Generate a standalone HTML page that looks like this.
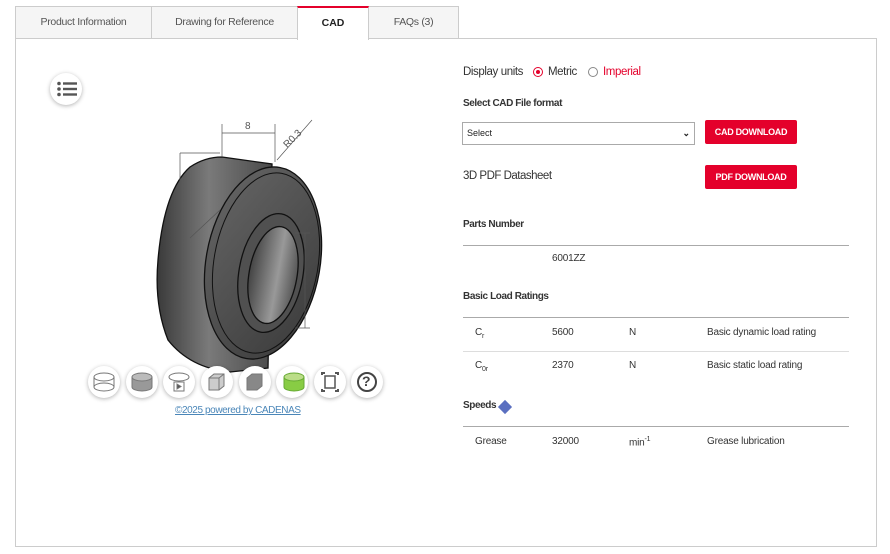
<!DOCTYPE html>
<html><head><meta charset="utf-8"><style>
*{box-sizing:border-box;margin:0;padding:0}
body{width:890px;height:554px;background:#fff;font-family:"Liberation Sans",Arial,sans-serif;color:#333;position:relative;overflow:hidden}
.a{position:absolute}
.tab{position:absolute;top:6px;height:33px;background:#f5f5f5;border:1px solid #ccc;border-bottom:none;font-size:10.5px;color:#555;text-align:center;line-height:31px;letter-spacing:-0.3px}
.panel{position:absolute;left:15px;top:38px;width:862px;height:509px;border:1px solid #ccc}
.btn{position:absolute;background:#e4002b;color:#fff;font-size:9px;font-weight:bold;text-align:center;line-height:24px;border-radius:2px;width:92px;height:24px;letter-spacing:-0.3px}
.h{font-size:10px;font-weight:bold;color:#333;letter-spacing:-0.4px}
.line{position:absolute;left:463px;width:386px;height:1px;background:#aaa}
.t{position:absolute;font-size:10px;color:#333;letter-spacing:-0.2px}
.circ{position:absolute;width:32px;height:32px;border-radius:50%;background:#fff;box-shadow:0 1px 4px rgba(0,0,0,.3)}
</style></head><body>
<div class="tab" style="left:15px;width:137px">Product Information</div>
<div class="tab" style="left:151px;width:147px">Drawing for Reference</div>
<div class="tab" style="left:368px;width:91px">FAQs (3)</div>
<div class="panel"></div>
<div class="a" style="left:297px;top:6px;width:72px;height:34px;background:#fff;border:1px solid #ccc;border-top:2px solid #e4002b;border-bottom:none;font-size:10.5px;font-weight:bold;text-align:center;line-height:30px;color:#222">CAD</div>

<div class="circ" style="left:50px;top:73px"></div>
<svg class="a" style="left:56px;top:81px" width="22" height="16"><g fill="#555"><circle cx="3" cy="2.5" r="1.8"/><circle cx="3" cy="8" r="1.8"/><circle cx="3" cy="13.5" r="1.8"/><rect x="7" y="1.3" width="14" height="2.4"/><rect x="7" y="6.8" width="14" height="2.4"/><rect x="7" y="12.3" width="14" height="2.4"/></g></svg>

<svg class="a" style="left:150px;top:110px" width="190" height="270">
<defs><linearGradient id="g" x1="0" x2="1"><stop offset="0" stop-color="#3a3a3a"/><stop offset=".45" stop-color="#7a7a7a"/><stop offset="1" stop-color="#4a4a4a"/></linearGradient>
<linearGradient id="f" x1="0" x2="1" y1="0" y2="1"><stop offset="0" stop-color="#666"/><stop offset="1" stop-color="#3a3a3a"/></linearGradient>
<linearGradient id="h" x1="0" x2="1"><stop offset="0" stop-color="#444"/><stop offset=".6" stop-color="#999"/><stop offset="1" stop-color="#555"/></linearGradient></defs>
<path d="M72 47 L122 54 L118 258 L80 262 Q40 258 18 230 Q4 195 8 150 Q14 80 40 57 Q55 47 72 47Z" fill="url(#g)" stroke="#111" stroke-width="1.3"/>
<ellipse cx="113" cy="153" rx="57" ry="97" transform="rotate(10 113 153)" fill="url(#f)" stroke="#111" stroke-width="1.3"/>
<ellipse cx="116" cy="153" rx="52" ry="91" transform="rotate(10 116 153)" fill="none" stroke="#111" stroke-width="1"/>
<ellipse cx="121" cy="163" rx="32" ry="60" transform="rotate(10 121 163)" fill="#505050" stroke="#111" stroke-width="1.3"/>
<ellipse cx="123" cy="165" rx="24" ry="49" transform="rotate(10 123 165)" fill="url(#h)" stroke="#111" stroke-width="1.3"/>
<g stroke="#555" stroke-width=".7" fill="none"><path d="M72 14V47M125 14V52M72 23H125M30 43V240M30 43H70M127 50L162 10M155 123V218M145 123h15M145 218h15M40 128L70 100"/></g>
<g font-size="10" fill="#555"><text x="95" y="19">8</text><text x="133" y="36" transform="rotate(-45 138 32)">R0.3</text></g>
</svg>

<div class="circ" style="left:88px;top:366px"></div><div class="circ" style="left:126px;top:366px"></div><div class="circ" style="left:163px;top:366px"></div><div class="circ" style="left:201px;top:366px"></div><div class="circ" style="left:239px;top:366px"></div><div class="circ" style="left:276px;top:366px"></div><div class="circ" style="left:314px;top:366px"></div><div class="circ" style="left:351px;top:366px"></div>
<svg class="a" style="left:88px;top:366px" width="300" height="32" fill="none" stroke="#777" stroke-width="1">
<ellipse cx="16" cy="11" rx="10" ry="4"/><path d="M6 11v10M26 11v10"/><ellipse cx="16" cy="21" rx="10" ry="4"/>
<path d="M44 11v10a10 4 0 0 0 20 0V11" fill="#999"/><ellipse cx="54" cy="11" rx="10" ry="4" fill="#bbb"/>
<ellipse cx="91" cy="11" rx="10" ry="4"/><rect x="86" y="16" width="10" height="9" fill="#fff"/><path d="M89 18l4 2.5-4 2.5z" fill="#555"/>
<path d="M121 12l5-4h10v12l-5 4h-10z" fill="#ccc"/><path d="M121 12h10v12M131 12l5-4"/>
<path d="M159 12l5-4h10v12l-5 4h-10z" fill="#888"/>
<path d="M196 11v10a10 4 0 0 0 20 0V11" fill="#8c4" stroke="#6a3"/><ellipse cx="206" cy="11" rx="10" ry="4" fill="#bd8" stroke="#6a3"/>
<g stroke="#555" stroke-width="2"><path d="M234 9V7h3M247 7h3v2M250 23v2h-3M237 25h-3v-2"/><rect x="237" y="10" width="10" height="12" stroke-width="1.5"/></g>
<circle cx="279" cy="16" r="9" stroke="#444" stroke-width="2"/></svg>
<div class="a" style="left:362px;top:373px;font-size:14px;font-weight:bold;color:#444">?</div>
<div class="a" style="left:175px;top:405px;font-size:10px;color:#4a86b8;text-decoration:underline;letter-spacing:-0.4px">©2025 powered by CADENAS</div>

<div class="t" style="left:463px;top:66px;font-size:11.5px;letter-spacing:-0.4px">Display units</div>
<div class="a" style="left:533px;top:67px;width:10px;height:10px;border:1px solid #e4002b;border-radius:50%"><div style="margin:2px;width:4px;height:4px;border-radius:50%;background:#e4002b"></div></div>
<div class="t" style="left:548px;top:66px;font-size:11.5px;letter-spacing:-0.4px">Metric</div>
<div class="a" style="left:588px;top:67px;width:10px;height:10px;border:1px solid #888;border-radius:50%"></div>
<div class="t" style="left:603px;top:66px;font-size:11.5px;color:#e4002b;letter-spacing:-0.4px">Imperial</div>
<div class="a h" style="left:463px;top:98px">Select CAD File format</div>
<div class="a" style="left:462px;top:122px;width:233px;height:23px;border:1px solid #aaa;font-size:9px;line-height:21px;padding-left:4px;color:#222">Select<span style="position:absolute;right:4px;top:0;font-weight:bold">&#8964;</span></div>
<div class="btn" style="left:705px;top:120px">CAD DOWNLOAD</div>
<div class="t" style="left:463px;top:170px;font-size:11.5px;letter-spacing:-0.5px">3D PDF Datasheet</div>
<div class="btn" style="left:705px;top:165px">PDF DOWNLOAD</div>
<div class="a h" style="left:463px;top:219px">Parts Number</div>
<div class="line" style="top:245px"></div>
<div class="t" style="left:552px;top:253px">6001ZZ</div>
<div class="a h" style="left:463px;top:291px">Basic Load Ratings</div>
<div class="line" style="top:317px"></div>
<div class="t" style="left:475px;top:327px">C<sub style="font-size:7px">r</sub></div><div class="t" style="left:552px;top:327px">5600</div><div class="t" style="left:629px;top:327px">N</div><div class="t" style="left:707px;top:327px">Basic dynamic load rating</div>
<div class="line" style="top:351px;background:#ddd"></div>
<div class="t" style="left:475px;top:360px">C<sub style="font-size:7px">0r</sub></div><div class="t" style="left:552px;top:360px">2370</div><div class="t" style="left:629px;top:360px">N</div><div class="t" style="left:707px;top:360px">Basic static load rating</div>
<div class="a h" style="left:463px;top:400px">Speeds</div>
<div class="a" style="left:500px;top:402px;width:10px;height:10px;background:#5a6fc0;transform:rotate(45deg)"></div>
<div class="line" style="top:426px"></div>
<div class="t" style="left:475px;top:436px">Grease</div><div class="t" style="left:552px;top:436px">32000</div><div class="t" style="left:629px;top:436px">min<sup style="font-size:7px">-1</sup></div><div class="t" style="left:707px;top:436px">Grease lubrication</div>
</body></html>
